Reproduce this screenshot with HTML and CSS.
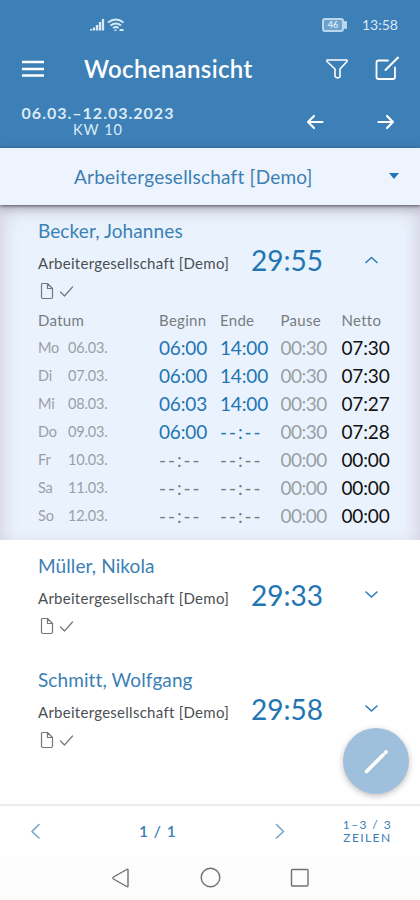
FILE: index.html
```html
<!DOCTYPE html>
<html lang="de">

<head>
    <meta charset="utf-8">
    <title>Wochenansicht</title>
    <link rel="stylesheet" href="styles.css">
</head>

<body>
    <div class="app">
        <header class="header">
            <div class="status">
                <svg class="signal" width="34" height="14" viewBox="0 0 34 14">
                    <path d="M1 12.500v-1.500M4 12.500V9.500M7 12.500V7M10 12.500V4M13 12.500V1" stroke-width="2.300" />
                    <path d="M18 4.500q8-6 15.500 0M20.500 7.500q5.500-4 10.500 0M23 10q3-2 5.500 0" stroke-width="1.900" />
                    <path d="M25.500 11.500v1.500M29.500 12h4" stroke-width="2" />
                </svg>
                <div class="battery"><span>46</span></div>
                <span class="clock">13:58</span>
            </div>
            <div class="title-row">
                <svg class="menu" width="22" height="18" viewBox="0 0 22 18">
                    <path d="M0 2h22M0 9h22M0 15.500h22" stroke-width="2.300" />
                </svg>
                <h1>Wochenansicht</h1>
                <svg class="filter" width="22" height="20" viewBox="0 0 22 20">
                    <path d="M1 1h20v1.500l-7 7.500v8q-2.500 2-5-.5V10L1 2.500z" />
                </svg>
                <svg class="edit" width="25" height="25" viewBox="0 0 25 25">
                    <path d="M13 4.500H3.500q-2 0-2 2v14.500q0 2 2 2H18q2 0 2-2V11.500" stroke-width="1.800" />
                    <path d="M10.500 14L23 1.500" stroke-width="2" />
                </svg>
            </div>
            <div class="week-row">
                <div class="week">
                    <strong>06.03.–12.03.2023</strong>
                    <span>KW 10</span>
                </div>
                <svg class="prev" width="18" height="16" viewBox="0 0 18 16">
                    <path d="M16.500 8H2M8 2L2 8l6 6" />
                </svg>
                <svg class="next" width="18" height="16" viewBox="0 0 18 16">
                    <path d="M1.500 8H16M10 2l6 6-6 6" />
                </svg>
            </div>
        </header>

        <div class="select">
            <span>Arbeitergesellschaft [Demo]</span>
            <svg width="10" height="6" viewBox="0 0 10 6">
                <path d="M0 0h10L5 6z" />
            </svg>
        </div>

        <main class="list">
            <section class="item open">
                <div class="name">Becker, Johannes</div>
                <div class="info">
                    <span class="firm">Arbeitergesellschaft [Demo]</span>
                    <span class="total">29:55</span>
                    <svg class="toggle" width="14" height="8" viewBox="0 0 14 8">
                        <path d="M2 6.500L7.500 1.500 13 6.500" />
                    </svg>
                </div>
                <div class="marks">
                    <svg width="36" height="18" viewBox="0 0 36 18">
                        <path d="M4.500 1.500h5l5 5V15q0 1.500-1.500 1.500H5q-1.500 0-1.500-1.500V2.500q0-1 1-1zM9.500 1.500v5h5" />
                        <path d="M22.500 10l4 4L34.500 5" />
                    </svg>
                </div>
                <div class="table">
                    <div class="row head"><span class="date">Datum</span><span>Beginn</span><span>Ende</span><span>Pause</span><span>Netto</span></div>
                    <div class="row"><span class="day">Mo</span><span class="day">06.03.</span><span class="set">06:00</span><span class="set">14:00</span><span class="pause">00:30</span><span class="net">07:30</span></div>
                    <div class="row"><span class="day">Di</span><span class="day">07.03.</span><span class="set">06:00</span><span class="set">14:00</span><span class="pause">00:30</span><span class="net">07:30</span></div>
                    <div class="row"><span class="day">Mi</span><span class="day">08.03.</span><span class="set">06:03</span><span class="set">14:00</span><span class="pause">00:30</span><span class="net">07:27</span></div>
                    <div class="row"><span class="day">Do</span><span class="day">09.03.</span><span class="set">06:00</span><span class="none set">--:--</span><span class="pause">00:30</span><span class="net">07:28</span></div>
                    <div class="row"><span class="day">Fr</span><span class="day">10.03.</span><span class="none">--:--</span><span class="none">--:--</span><span class="pause">00:00</span><span class="net">00:00</span></div>
                    <div class="row"><span class="day">Sa</span><span class="day">11.03.</span><span class="none">--:--</span><span class="none">--:--</span><span class="pause">00:00</span><span class="net">00:00</span></div>
                    <div class="row"><span class="day">So</span><span class="day">12.03.</span><span class="none">--:--</span><span class="none">--:--</span><span class="pause">00:00</span><span class="net">00:00</span></div>
                </div>
            </section>

            <section class="item">
                <div class="name">Müller, Nikola</div>
                <div class="info">
                    <span class="firm">Arbeitergesellschaft [Demo]</span>
                    <span class="total">29:33</span>
                    <svg class="toggle" width="14" height="8" viewBox="0 0 14 8">
                        <path d="M2 1L7.500 6 13 1" />
                    </svg>
                </div>
                <div class="marks">
                    <svg width="36" height="18" viewBox="0 0 36 18">
                        <path d="M4.500 1.500h5l5 5V15q0 1.500-1.500 1.500H5q-1.500 0-1.500-1.500V2.500q0-1 1-1zM9.500 1.500v5h5" />
                        <path d="M22.500 10l4 4L34.500 5" />
                    </svg>
                </div>
            </section>

            <section class="item">
                <div class="name">Schmitt, Wolfgang</div>
                <div class="info">
                    <span class="firm">Arbeitergesellschaft [Demo]</span>
                    <span class="total">29:58</span>
                    <svg class="toggle" width="14" height="8" viewBox="0 0 14 8">
                        <path d="M2 1L7.500 6 13 1" />
                    </svg>
                </div>
                <div class="marks">
                    <svg width="36" height="18" viewBox="0 0 36 18">
                        <path d="M4.500 1.500h5l5 5V15q0 1.500-1.500 1.500H5q-1.500 0-1.500-1.500V2.500q0-1 1-1zM9.500 1.500v5h5" />
                        <path d="M22.500 10l4 4L34.500 5" />
                    </svg>
                </div>
            </section>
        </main>

        <footer class="pager">
            <svg width="10" height="16" viewBox="0 0 10 16">
                <path d="M8 1.500L1 8.500l7 6.500" />
            </svg>
            <span class="page">1 / 1</span>
            <svg width="10" height="16" viewBox="0 0 10 16">
                <path d="M1.500 1.500l7 7-7 6.500" />
            </svg>
            <div class="lines"><div>1–3 / 3</div><div>ZEILEN</div></div>
        </footer>

        <nav class="system">
            <svg width="20" height="22" viewBox="0 0 20 22">
                <path d="M18 3v16q0 1.300-1.300.5L3.500 12q-1.300-1 0-2L16.700 2.500q1.300-.8 1.300.5z" />
            </svg>
            <svg width="22" height="22" viewBox="0 0 22 22">
                <circle cx="11.500" cy="10.500" r="9.300" />
            </svg>
            <svg width="20" height="20" viewBox="0 0 20 20">
                <rect x="1.500" y="1.500" width="16.500" height="16.500" rx="1" />
            </svg>
        </nav>

        <button class="fab">
            <svg width="26" height="26" viewBox="0 0 26 26">
                <path d="M3.500 23.500L20 7" stroke-width="3.600" />
                <path d="M22.600 4.400l.4-.4" stroke-width="3.800" />
            </svg>
        </button>
    </div>
</body>

</html>
```
FILE: styles.css
```css
* {
    padding: 0;
    margin: 0;
    box-sizing: border-box;
}

body {
    font-family: Lato, "Liberation Sans", sans-serif;
    font-variant-ligatures: none;
    background: #fff;
}

svg {
    display: block;
    flex: none;
    fill: none;
    stroke: currentColor;
    stroke-width: 1.6;
    stroke-linecap: round;
    stroke-linejoin: round;
}

.app {
    position: relative;
    width: 420px;
    height: 900px;
    display: flex;
    flex-direction: column;
    overflow: hidden;
    white-space: nowrap;
}

/* header */
.header {
    height: 148px;
    background: #3d7fb7;
    color: #fff;
}

.status {
    height: 48px;
    display: flex;
    align-items: center;
    padding: 1px 22px 0 90px;
    color: #d9e9f5;
}

.signal {
    stroke-linecap: butt;
}

.battery {
    position: relative;
    width: 22px;
    height: 14px;
    margin-left: auto;
    border: 2px solid #bcd6eb;
    border-radius: 3px;
    font-size: 9px;
    font-weight: bold;
    line-height: 10px;
    text-align: center;
    background: #6fa3cf;
}

.battery::after {
    content: "";
    position: absolute;
    left: 20px;
    top: 1px;
    width: 3px;
    height: 8px;
    border-radius: 1px;
    background: #bcd6eb;
}

.clock {
    width: 36px;
    margin-left: 18px;
    font-size: 14px;
}

.title-row {
    height: 41px;
    display: flex;
    align-items: center;
    padding: 0 20px 0 22px;
}

.title-row h1 {
    width: 242px;
    margin-left: 40px;
    font-size: 24px;
    font-weight: 600;
    letter-spacing: 0.35px;
}

.menu {
    stroke-linecap: butt;
}

.edit {
    margin-left: 27px;
}

.week-row {
    height: 59px;
    display: flex;
    align-items: center;
    padding: 7px 25px 0 21px;
}

.week {
    width: 154px;
    margin-top: -2px;
    text-align: center;
    color: #dbeaf6;
    font-size: 16px;
    line-height: 17px;
    letter-spacing: 1px;
}

.week strong,
.week span {
    display: block;
}

.week span {
    font-size: 14.5px;
}

.week-row svg {
    stroke-width: 2.2;
}

.prev {
    margin-left: 131px;
}

.next {
    margin-left: 53px;
}

/* company select */
.select {
    position: relative;
    height: 57px;
    display: flex;
    align-items: center;
    padding: 0 21px 1px 74px;
    justify-content: space-between;
    background: #edf4fd;
    color: #3d7fb2;
    font-size: 19px;
    letter-spacing: 0.22px;
    box-shadow: 0 1px 3px rgba(0, 0, 0, .5), 0 3px 10px rgba(0, 0, 0, .22);
    z-index: 1;
}

.select svg {
    fill: #2375b5;
    stroke: none;
}

/* employees */
.list {
    flex: 1;
}

.item {
    height: 114px;
    padding: 14px 0 0 38px;
}

.item.open {
    height: 335px;
    background: #eaf3fd;
    box-shadow: inset 0 10px 22px -8px rgba(190, 180, 200, .6), inset 14px 0 18px -10px rgba(205, 190, 215, .45), inset -14px 0 18px -10px rgba(205, 190, 215, .45);
}

.name {
    height: 23px;
    line-height: 23px;
    font-size: 19px;
    letter-spacing: 0.1px;
    color: #3b80b5;
}

.info {
    height: 36px;
    display: flex;
    align-items: center;
}

.firm {
    width: 213px;
    padding-top: 6px;
    font-size: 15px;
    letter-spacing: 0.27px;
    color: #4b4f53;
}

.total {
    width: 107px;
    font-size: 28px;
    color: #2275b2;
}

.toggle {
    margin-left: 6px;
    color: #2f7cb8;
}

.marks {
    height: 21px;
    padding-top: 4px;
    color: #73777b;
}

.marks svg {
    stroke-width: 1.2;
}

.table {
    padding-top: 8px;
}

.row {
    height: 28.1px;
    display: grid;
    grid-template-columns: 30px 91px 61px 60.5px 61px 60px;
    align-items: center;
    font-size: 19px;
    letter-spacing: -0.15px;
    color: #9a9fa5;
}

.row.head {
    height: 26px;
    font-size: 15px;
    letter-spacing: 0.3px;
    color: #777c81;
}

.date {
    grid-column: span 2;
}

.row .day {
    font-size: 14.5px;
}

.row .set {
    color: #1f75b3;
}

.row .pause {
    letter-spacing: -0.5px;
}

.row .net {
    color: #111;
}

.row .none {
    letter-spacing: 1.9px;
}

.row .none:not(.set) {
    color: #777c81;
}

/* pager */
.pager {
    height: 52px;
    display: flex;
    align-items: center;
    border-top: 2px solid #ececec;
    padding: 0 28px 0 31px;
    color: #3d80b5;
}

.pager svg {
    opacity: .7;
}

.page {
    width: 136px;
    margin-left: 98px;
    padding-bottom: 1px;
    font-size: 15.5px;
    font-weight: 600;
    letter-spacing: 1px;
}

.lines {
    margin-left: auto;
    text-align: center;
    font-size: 12px;
    line-height: 13.5px;
    letter-spacing: 1.4px;
}

.system {
    height: 44px;
    display: flex;
    justify-content: center;
    align-items: center;
    gap: 69px;
    background: #fcfcfc;
    color: #707070;
}

.system svg {
    stroke-width: 1.4;
}

.fab {
    position: absolute;
    right: 11px;
    top: 728px;
    width: 66px;
    height: 66px;
    display: flex;
    align-items: center;
    justify-content: center;
    border: 0;
    border-radius: 50%;
    background: #9fc0dc;
    color: #fff;
    box-shadow: 0 2px 6px rgba(0, 0, 0, .25);
}
```
